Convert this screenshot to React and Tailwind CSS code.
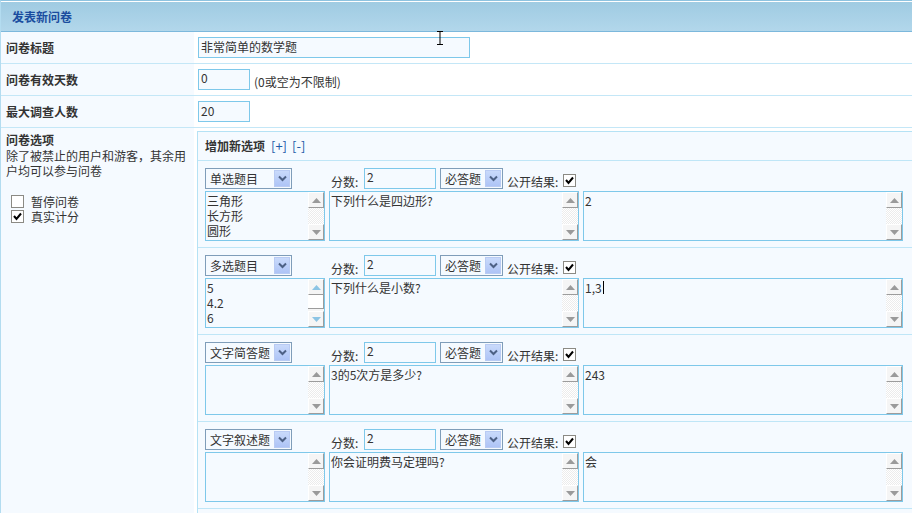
import React from 'react'

const Arrow = ({ up, color = '#9a9a9a' }) => (
  <svg width="9" height="5" viewBox="0 0 9 5">
    {up ? <path d="M0 5 L4.5 0 L9 5 Z" fill={color} /> : <path d="M0 0 L4.5 5 L9 0 Z" fill={color} />}
  </svg>
)

function ScrollBtn({ up, color }) {
  return (
    <div className="h-[16px] w-[16px] flex items-center justify-center bg-[#f5f5f5] border-t border-l border-white border-r border-b border-r-[#9c9c9c] border-b-[#9c9c9c]">
      <Arrow up={up} color={color} />
    </div>
  )
}

// fake textarea / listbox with classic scrollbar
function Box({ className, lines = [], thumb, cursor }) {
  return (
    <div className={`flex h-[50px] border border-[#7ec8ea] bg-[#f5faff] ${className}`}>
      <div className="flex-1 pl-[1px] pt-[1px] leading-[15px] text-[#333] overflow-hidden">
        {lines.map((l, i) => (
          <div key={i} className="flex items-center h-[15px]">
            {l}
            {cursor && i === lines.length - 1 && <span className="ml-[1px] inline-block w-px h-[13px] bg-black" />}
          </div>
        ))}
      </div>
      <div className="w-[16px] flex flex-col">
        <ScrollBtn up color={thumb ? '#8cc4e4' : '#9a9a9a'} />
        {thumb ? (
          <div className="flex-1 flex flex-col bg-[#f5f5f5]">
            <div className="h-[14px] bg-white border-r border-b border-[#9c9c9c]" />
          </div>
        ) : (
          <div className="flex-1 bg-[repeating-conic-gradient(#ececec_0%_25%,#ffffff_0%_50%)] bg-[length:2px_2px]" />
        )}
        <ScrollBtn color={thumb ? '#8cc4e4' : '#9a9a9a'} />
      </div>
    </div>
  )
}

function Select({ value, className }) {
  return (
    <div className={`h-[21px] flex items-center border border-[#7f9db9] bg-[#f5faff] ${className}`}>
      <span className="flex-1 pl-[4px] leading-[15px]">{value}</span>
      <div className="w-[16px] h-[17px] mr-[1px] flex items-center justify-center bg-gradient-to-b from-[#c9dafb] to-[#aec4f6] border border-[#b9cbf3]">
        <svg width="9" height="7" viewBox="0 0 9 7">
          <path d="M1 1.5 L4.5 5 L8 1.5" stroke="#4d6185" strokeWidth="2" fill="none" />
        </svg>
      </div>
    </div>
  )
}

function Check({ checked, className = '' }) {
  return (
    <div className={`w-[13px] h-[13px] border border-[#8b8a84] bg-white flex items-center justify-center ${className}`}>
      {checked && (
        <svg width="9" height="9" viewBox="0 0 9 9">
          <path d="M1 4 L3.5 7 L8 1.5" stroke="#000" strokeWidth="2" fill="none" />
        </svg>
      )}
    </div>
  )
}

const questions = [
  { type: '单选题目', opts: ['三角形', '长方形', '圆形'], q: '下列什么是四边形?', a: '2' },
  { type: '多选题目', opts: ['5', '4.2', '6'], q: '下列什么是小数?', a: '1,3', thumb: true, cursor: true },
  { type: '文字简答题', opts: [], q: '3的5次方是多少?', a: '243' },
  { type: '文字叙述题', opts: [], q: '你会证明费马定理吗?', a: '会' },
]

function Question({ item }) {
  return (
    <div className="pl-[7px] pt-[7px] pb-[6px] border-b border-[#bfe6f7]">
      <div className="flex items-end h-[21px]">
        <div className="w-[124px]">
          <Select value={item.type} className="w-[87px]" />
        </div>
        <span className="w-[35px] pl-[2px] leading-[15px]">分数:</span>
        <div className="w-[72px] h-[21px] border border-[#7ec8ea] bg-[#f5faff] pl-[2px] leading-[15px]">2</div>
        <Select value="必答题" className="w-[63px] ml-[4px]" />
        <span className="w-[60px] pl-[4px] leading-[15px]">公开结果:</span>
        <Check checked className="mb-[2px]" />
      </div>
      <div className="flex mt-[2px]">
        <Box className="w-[120px]" lines={item.opts} thumb={item.thumb} />
        <Box className="w-[250px] ml-[4px]" lines={[item.q]} />
        <Box className="w-[320px] ml-[4px]" lines={[item.a]} cursor={item.cursor} />
      </div>
    </div>
  )
}

export default function App() {
  return (
    <div className="w-[912px] h-[513px] overflow-hidden bg-white text-[12px] text-[#333] font-['Noto_Sans_CJK_SC',sans-serif] relative">
      <div className="border-t border-l border-t-[#8ec3e0] border-l-[#b3dcf0]">
        {/* header */}
        <div className="h-[31px] border-t border-white border-b border-b-[#7cb8dc] bg-gradient-to-b from-[#9fcbe2] to-[#b2d7eb] flex items-center pl-[11px]">
          <span className="font-bold text-[#1a4d9f] leading-[15px]">发表新问卷</span>
        </div>

        <div className="flex h-[32px] border-b border-[#c4e7f7]">
          <div className="w-[193px] bg-[#f5faff] pl-[5px] flex items-center font-bold">问卷标题</div>
          <div className="flex-1 pl-[4px] flex items-center">
            <div className="w-[272px] h-[21px] border border-[#7ec8ea] bg-[#f5faff] pl-[2px] leading-[17px]">非常简单的数学题</div>
          </div>
        </div>

        <div className="flex h-[32px] border-b border-[#c4e7f7]">
          <div className="w-[193px] bg-[#f5faff] pl-[5px] flex items-center font-bold">问卷有效天数</div>
          <div className="flex-1 pl-[4px] flex items-center">
            <div className="w-[52px] h-[21px] border border-[#7ec8ea] bg-[#f5faff] pl-[2px] leading-[15px]">0</div>
            <span className="ml-[4px] mt-[4px] leading-[15px]">(0或空为不限制)</span>
          </div>
        </div>

        <div className="flex h-[32px] border-b border-[#c4e7f7]">
          <div className="w-[193px] bg-[#f5faff] pl-[5px] flex items-center font-bold">最大调查人数</div>
          <div className="flex-1 pl-[4px] flex items-center">
            <div className="w-[52px] h-[21px] border border-[#7ec8ea] bg-[#f5faff] pl-[2px] leading-[17px]">20</div>
          </div>
        </div>

        <div className="flex">
          <div className="w-[193px] bg-[#f5faff] pl-[5px] pt-[4px] leading-[15px] h-[400px]">
            <div className="font-bold">问卷选项</div>
            <div className="w-[184px] mt-px leading-[15px]">除了被禁止的用户和游客，其余用户均可以参与问卷</div>
            <div className="mt-[16px] flex items-center h-[15px] pl-[5px]">
              <Check />
              <span className="ml-[7px]">暂停问卷</span>
            </div>
            <div className="flex items-center h-[15px] pl-[5px]">
              <Check checked />
              <span className="ml-[7px]">真实计分</span>
            </div>
          </div>
          <div className="flex-1 pl-[3px] pt-[3px]">
            <div className="border-t border-l border-[#b5e2f5] bg-[#f5faff] h-[400px]">
              <div className="h-[29px] border-b border-[#bfe6f7] pl-[7px] flex items-center">
                <span className="font-bold">增加新选项</span>
                <span className="ml-[6px] text-[#1d5aa8] text-[13px]">[+]</span>
                <span className="ml-[5px] text-[#1d5aa8] text-[13px]">[-]</span>
              </div>
              {questions.map((q, i) => (
                <Question key={i} item={q} />
              ))}
            </div>
          </div>
        </div>
      </div>
      {/* mouse text cursor */}
      <svg className="absolute left-[436px] top-[31px]" width="8" height="14" viewBox="0 0 8 14">
        <path d="M1 0.5 H7 M4 0.5 V13.5 M1 13.5 H7" stroke="#000" strokeWidth="1" fill="none" />
      </svg>
    </div>
  )
}
